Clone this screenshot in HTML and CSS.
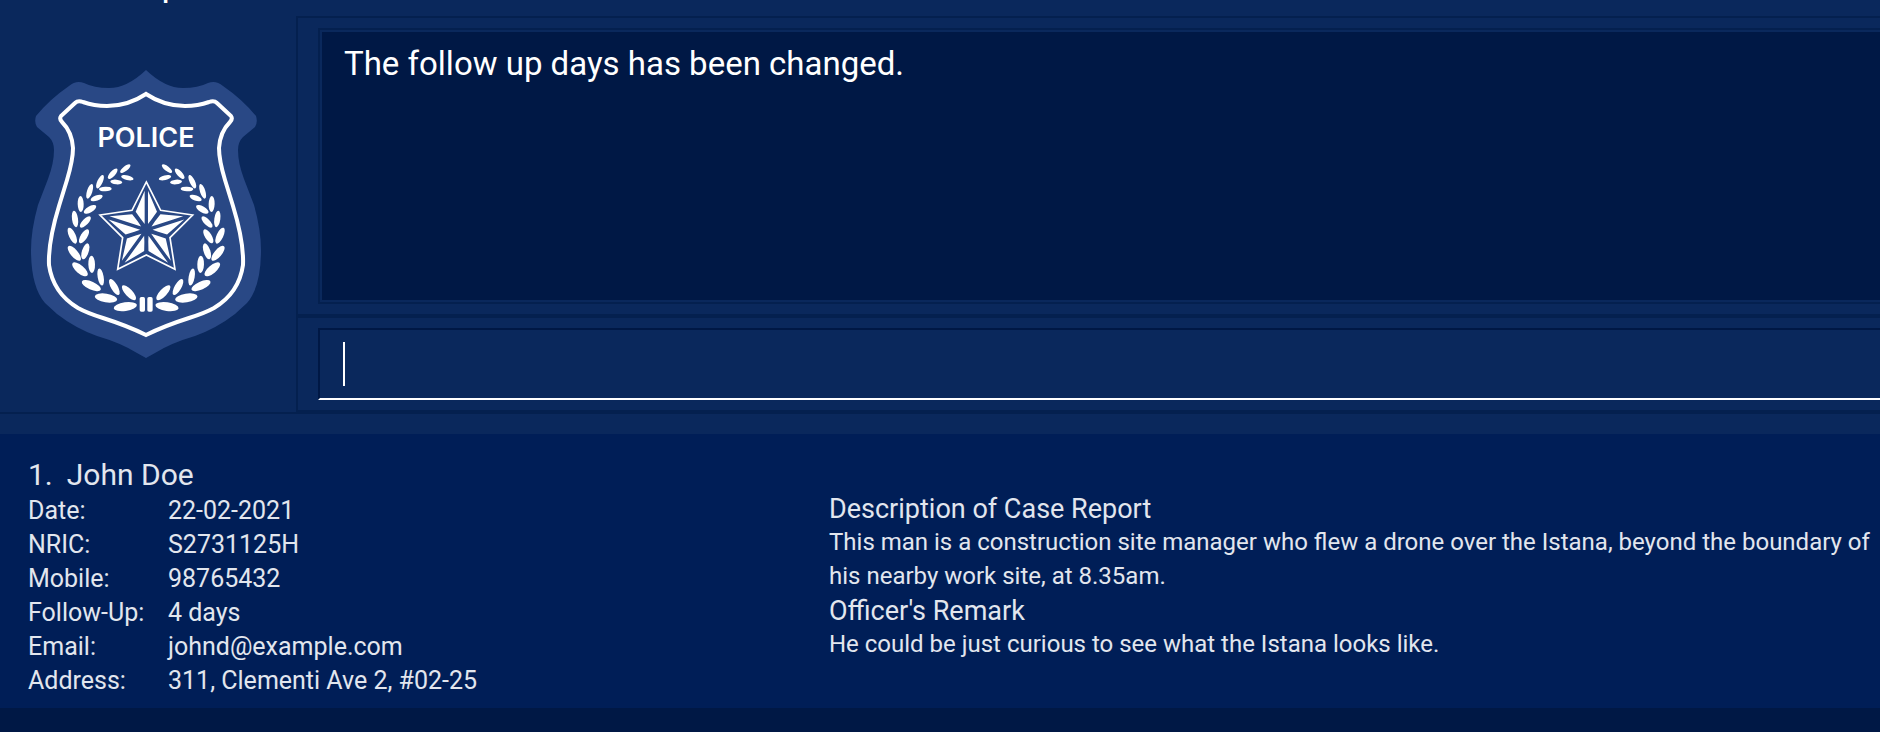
FILE: index.html
```
<!DOCTYPE html>
<html lang="en">
<head>
<meta charset="utf-8">
<meta name="viewport" content="width=device-width, initial-scale=1">
<title>Case Tracker</title>
<link rel="stylesheet" href="styles.css">
</head>
<body>
<div class="console">
  <aside class="sidebar">
    <nav class="menu"><a class="menu-item" href="#help">Help</a></nav>
    <svg class="badge" viewBox="28 68 236 292" role="img" aria-label="Police badge">
      <defs>
        <g id="branch">
          <ellipse cx="196" cy="56" rx="19" ry="7" transform="rotate(-38 196 56)"/>
          <ellipse cx="158" cy="71" rx="20" ry="8" transform="rotate(-48 158 71)"/>
          <ellipse cx="120" cy="95" rx="22" ry="8" transform="rotate(-65 120 95)"/>
          <ellipse cx="89" cy="124" rx="23" ry="8" transform="rotate(-72 89 124)"/>
          <ellipse cx="62" cy="162" rx="24" ry="9" transform="rotate(88 62 162)"/>
          <ellipse cx="45" cy="207" rx="25" ry="9" transform="rotate(82 45 207)"/>
          <ellipse cx="37" cy="257" rx="26" ry="10" transform="rotate(65 37 257)"/>
          <ellipse cx="43" cy="310" rx="28" ry="11" transform="rotate(50 43 310)"/>
          <ellipse cx="60" cy="358" rx="29" ry="12" transform="rotate(40 60 358)"/>
          <ellipse cx="94" cy="407" rx="31" ry="12" transform="rotate(24 94 407)"/>
          <ellipse cx="138" cy="444" rx="34" ry="13" transform="rotate(9 138 444)"/>
          <ellipse cx="196" cy="470" rx="35" ry="13" transform="rotate(-8 196 470)"/>
          <ellipse cx="202" cy="83" rx="19" ry="7" transform="rotate(14 202 83)"/>
          <ellipse cx="169" cy="96" rx="18" ry="7" transform="rotate(6 169 96)"/>
          <ellipse cx="136" cy="117" rx="19" ry="7" transform="rotate(-3 136 117)"/>
          <ellipse cx="110" cy="144" rx="19" ry="8" transform="rotate(-20 110 144)"/>
          <ellipse cx="90" cy="178" rx="21" ry="9" transform="rotate(-30 90 178)"/>
          <ellipse cx="76" cy="216" rx="22" ry="9" transform="rotate(-46 76 216)"/>
          <ellipse cx="72" cy="259" rx="24" ry="10" transform="rotate(-58 72 259)"/>
          <ellipse cx="76" cy="304" rx="25" ry="10" transform="rotate(-72 76 304)"/>
          <ellipse cx="95" cy="343" rx="26" ry="10" transform="rotate(88 95 343)"/>
          <ellipse cx="122" cy="381" rx="26" ry="9" transform="rotate(80 122 381)"/>
          <ellipse cx="163" cy="411" rx="27" ry="10" transform="rotate(60 163 411)"/>
          <ellipse cx="207" cy="428" rx="29" ry="11" transform="rotate(47 207 428)"/>
          <rect x="239" y="441" width="16" height="44" rx="5"/>
        </g>
        <path id="arm" d="M254 122 254 222 243 208 227 185ZM264 122 264 222 275 208 291 185Z"/>
      </defs>
      <path class="badge-body" d="M146 70Q127 88 109 88Q94 88 84 83Q76 80 69 86Q50 99 36 116Q34 122 37 127L49 137Q54 142 54 150Q54 163 48 179L38 205Q31 230 31 250Q31 287 45 303L57 314Q75 328 97 336Q121 343 137 353L146 358L155 353Q171 343 195 336Q217 328 235 314L247 303Q261 287 261 250Q261 230 254 205L244 179Q238 163 238 150Q238 142 243 137L255 127Q258 122 256 116Q242 99 223 86Q216 80 208 83Q198 88 183 88Q165 88 146 70Z"/>
      <path class="badge-line" d="M146 94Q128 106 107 106Q94 106 83 102Q78 100 75 103L61 116Q59 119 62 122Q72 132 73 148Q73 160 67 180L59 206Q48 242 49 265Q53 293 78 308Q87 313 103 318Q128 326 146 335Q164 326 189 318Q205 313 214 308Q239 293 243 265Q244 242 233 206L225 180Q219 160 219 148Q220 132 230 122Q233 119 231 116L217 103Q214 100 209 102Q198 106 185 106Q164 106 146 94Z"/>
      <text class="badge-text" x="146" y="147">POLICE</text>
      <g class="badge-mark" transform="translate(60 150) scale(.3333)">
        <use href="#branch"/>
        <use href="#branch" transform="translate(517 0) scale(-1 1)"/>
        <path class="badge-star" d="M259 96 302 181 398 195 330 263 345 358 259 315 173 358 188 263 120 195 216 181Z"/>
        <use href="#arm"/>
        <use href="#arm" transform="rotate(72 259 240)"/>
        <use href="#arm" transform="rotate(144 259 240)"/>
        <use href="#arm" transform="rotate(216 259 240)"/>
        <use href="#arm" transform="rotate(288 259 240)"/>
      </g>
    </svg>
  </aside>
  <main class="panes">
    <section class="pane pane-result">
      <div class="result-frame"><output class="result" for="command">The follow up days has been changed.</output></div>
    </section>
    <form class="pane pane-command">
      <input class="command" id="command" type="text" aria-label="Command" autocomplete="off">
    </form>
  </main>
</div>
<section class="records" aria-label="Case records">
  <article class="record">
    <div class="person">
      <h2 class="person-name"><span>1.</span><span>John Doe</span></h2>
      <dl class="fields">
        <dt>Date:</dt><dd>22-02-2021</dd>
        <dt>NRIC:</dt><dd>S2731125H</dd>
        <dt>Mobile:</dt><dd>98765432</dd>
        <dt>Follow-Up:</dt><dd>4 days</dd>
        <dt>Email:</dt><dd>johnd@example.com</dd>
        <dt>Address:</dt><dd>311, Clementi Ave 2, #02-25</dd>
      </dl>
    </div>
    <div class="report">
      <div>
        <h3 class="report-title">Description of Case Report</h3>
        <p class="report-text">This man is a construction site manager who flew a drone over the Istana, beyond the boundary of his nearby work site, at 8.35am.</p>
      </div>
      <div>
        <h3 class="report-title">Officer's Remark</h3>
        <p class="report-text">He could be just curious to see what the Istana looks like.</p>
      </div>
    </div>
  </article>
</section>
</body>
</html>
```
FILE: styles.css
```
:root {
  --navy: #0a285c;
  --navy-edge: #04204f;
  --ink: #001845;
  --card: #001e57;
  --text: #e2e6ee;
}
* { box-sizing: border-box; }
body {
  margin: 0;
  min-height: 100vh;
  background: var(--ink);
  color: var(--text);
  font-family: Roboto, "Liberation Sans", sans-serif;
  overflow: hidden;
}
h2, h3, p, dl, dd { margin: 0; font-weight: 400; }

.console {
  display: grid;
  grid-template-columns: 296px minmax(0, 1fr);
  background: var(--navy);
  border-bottom: 2px solid var(--navy-edge);
}
.sidebar { display: flex; flex-direction: column; }
.menu {
  display: flex;
  justify-content: flex-end;
  align-items: flex-end;
  height: 16px;
  padding: 0 118px 12px 0;
  overflow: hidden;
}
.menu-item { color: #fff; font-size: 28px; font-weight: 500; line-height: 32px; text-decoration: none; }
.badge { width: 236px; height: 292px; margin: 52px 0 52px 28px; }
.badge-body { fill: #294885; }
.badge-line { fill: none; stroke: #fff; stroke-width: 4; stroke-linejoin: miter; }
.badge-text { fill: #fff; font: 600 27px Inter, sans-serif; text-anchor: middle; }
.badge-mark { fill: #fff; }
.badge-star { fill: none; stroke: #fff; stroke-width: 5; }

.panes { padding-top: 16px; }
.pane {
  border: 2px solid var(--navy-edge);
  border-right: 0;
  padding: 10px 0 10px 20px;
}
.result-frame { border: 2px solid var(--navy-edge); border-right: 0; padding: 2px 0 2px 2px; }
.result {
  display: block;
  min-height: 268px;
  padding: 12px 22px;
  background: var(--ink);
  color: #fff;
  font-size: 33px;
  line-height: 40px;
}
.pane-command { position: relative; }
.pane-command::after {
  content: "";
  position: absolute;
  left: 45px;
  top: 24px;
  width: 2px;
  height: 44px;
  background: #fff;
}
.command {
  display: block;
  width: 100%;
  height: 72px;
  padding: 0 24px;
  border: 2px solid var(--ink);
  border-right: 0;
  border-bottom-color: #fff;
  background: transparent;
  color: #fff;
  caret-color: transparent;
  font: 33px Roboto, "Liberation Sans", sans-serif;
  outline: 0;
}

.records { border-top: 20px solid var(--navy); }
.record {
  display: grid;
  grid-template-columns: 801px minmax(0, 1fr);
  align-items: center;
  padding: 22px 0 10px 28px;
  background: var(--card);
}
.person-name { display: flex; gap: 14px; font-size: 30px; line-height: 38px; }
.fields {
  display: grid;
  grid-template-columns: 140px minmax(0, 1fr);
  font-size: 25px;
  line-height: 34px;
}
.report { display: grid; gap: 2px; }
.report-title { font-size: 27px; line-height: 32px; }
.report-text { font-size: 24px; line-height: 34px; }
```
